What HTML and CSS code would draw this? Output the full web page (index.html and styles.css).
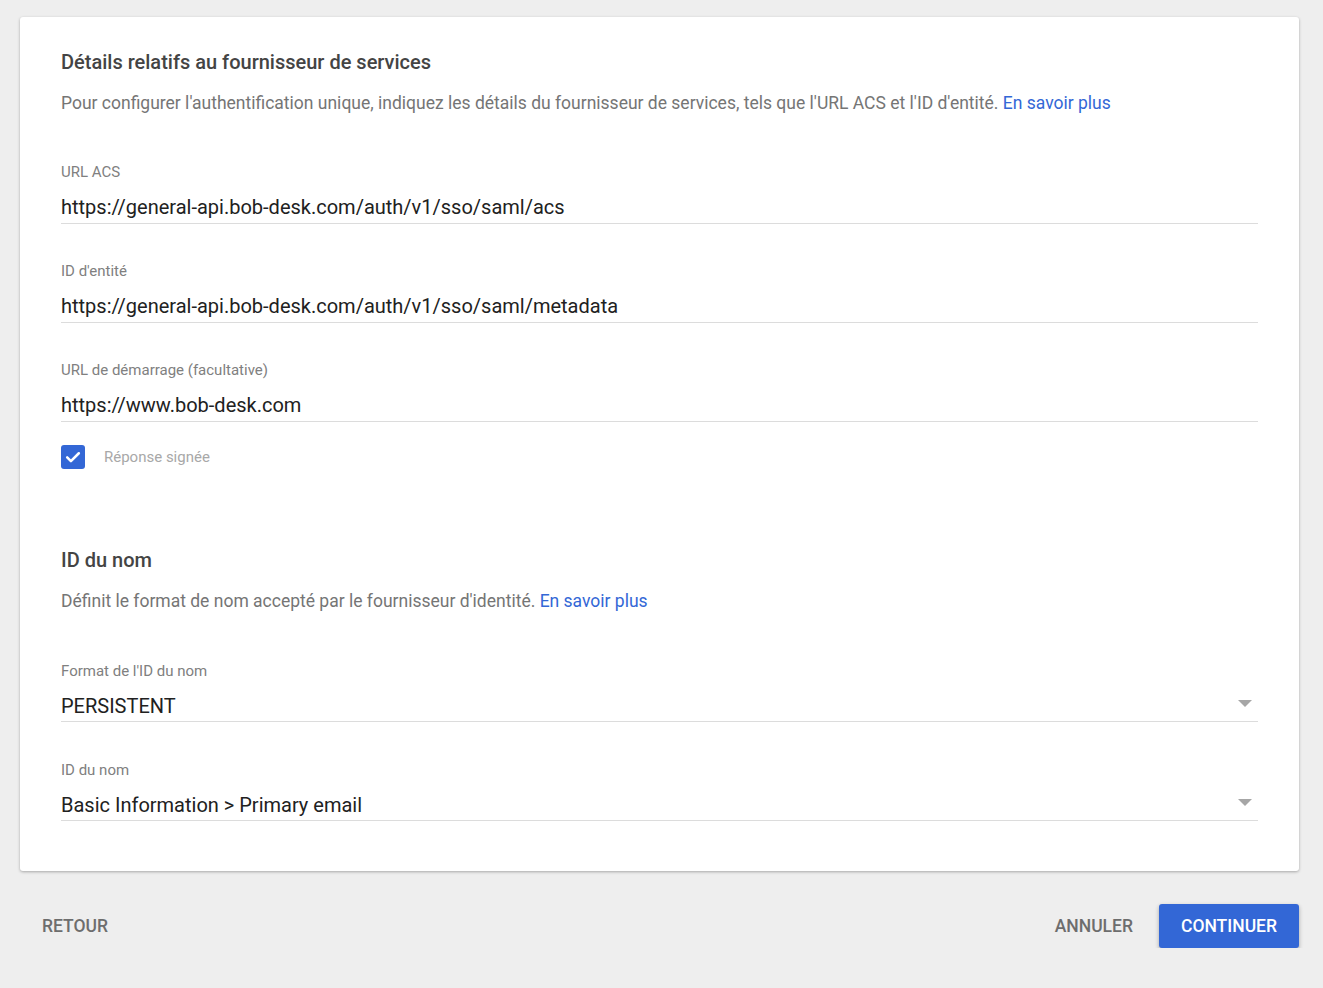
FILE: index.html
```html
<!DOCTYPE html>
<html lang="fr">
<head>
  <meta charset="UTF-8" />
  <meta name="viewport" content="width=device-width, initial-scale=1" />
  <title>Fournisseur de services</title>
  <link rel="stylesheet" href="styles.css">
</head>
<body>

  <div class="page">
    <div class="card">
      <div class="section">
        <div class="section-title">Détails relatifs au fournisseur de services</div>
        <div class="section-desc">
          Pour configurer l'authentification unique, indiquez les détails du fournisseur de services, tels que l'URL ACS et l'ID d'entité.
          <a class="link" href="#">En savoir plus</a>
        </div>

        <div class="field">
          <div class="label">URL ACS</div>
          <div class="value">https://general-api.bob-desk.com/auth/v1/sso/saml/acs</div>
        </div>
        <div class="field">
          <div class="label">ID d'entité</div>
          <div class="value">https://general-api.bob-desk.com/auth/v1/sso/saml/metadata</div>
        </div>
        <div class="field">
          <div class="label">URL de démarrage (facultative)</div>
          <div class="value">https://www.bob-desk.com</div>
        </div>

        <label class="checkbox-row">
          <span class="checkbox">
            <svg viewBox="0 0 24 24" width="20" height="20">
              <path d="M5 12.5l4.5 4.5L19 7.5" fill="none" stroke="#fff" stroke-width="3" stroke-linecap="round" stroke-linejoin="round"/>
            </svg>
          </span>
          <span class="checkbox-label">Réponse signée</span>
        </label>
      </div>

      <div class="section section-second">
        <div class="section-title">ID du nom</div>
        <div class="section-desc">
          Définit le format de nom accepté par le fournisseur d'identité.
          <a class="link" href="#">En savoir plus</a>
        </div>

        <div class="field">
          <div class="label">Format de l'ID du nom</div>
          <div class="value select">
            <span>PERSISTENT</span>
            <span class="arrow"></span>
          </div>
        </div>
        <div class="field">
          <div class="label">ID du nom</div>
          <div class="value select">
            <span>Basic Information &gt; Primary email</span>
            <span class="arrow"></span>
          </div>
        </div>
      </div>
    </div>

    <div class="actions">
      <button class="btn btn-flat">Retour</button>
      <div class="actions-right">
        <button class="btn btn-flat">Annuler</button>
        <button class="btn btn-primary">Continuer</button>
      </div>
    </div>
  </div>

</body>
</html>
```

FILE: styles.css
```css
body {
  font-family: Roboto, "Noto Sans", sans-serif;
  margin: 0;
  background: #eeeeee;
  color: #212121;
}
.page {
  padding: 17px 24px 0 20px;
}
.card {
  background: #fff;
  border-radius: 3px;
  box-shadow: 0 1px 3px rgba(0,0,0,0.3);
  padding: 33px 41px 50px 41px;
}
.section-second {
  margin-top: 79px;
}
.section-title {
  font-size: 20px;
  font-weight: 500;
  color: #444;
  line-height: 24px;
}
.section-desc {
  font-size: 17.5px;
  color: #757575;
  line-height: 24px;
  margin-top: 17px;
  margin-bottom: 47px;
}
.section-second .section-desc {
  margin-bottom: 48px;
}
.link {
  color: #3367d6;
  text-decoration: none;
}
.field {
  margin-bottom: 37px;
}
.section-second .field {
  margin-bottom: 38px;
}
.field:last-child,
.section-second .field:last-child {
  margin-bottom: 0;
}
.label {
  font-size: 15px;
  color: #808080;
  line-height: 20px;
}
.value {
  font-size: 20px;
  color: #212121;
  line-height: 24px;
  margin-top: 13px;
  padding-bottom: 4px;
  border-bottom: 1px solid #dcdcdc;
}
.select {
  display: flex;
  justify-content: space-between;
  align-items: center;
  padding-bottom: 3px;
}
.arrow {
  width: 0;
  height: 0;
  border-left: 7px solid transparent;
  border-right: 7px solid transparent;
  border-top: 7px solid #a6a6a6;
  margin-right: 6px;
  margin-bottom: 5px;
}
.checkbox-row {
  display: flex;
  align-items: center;
  gap: 19px;
  margin-top: -14px;
}
.checkbox {
  width: 24px;
  height: 24px;
  border-radius: 3px;
  background: #3367d6;
  display: flex;
  justify-content: center;
  align-items: center;
}
.checkbox-label {
  font-size: 15px;
  color: #a8a8a8;
}
.actions {
  display: flex;
  justify-content: space-between;
  align-items: center;
  margin-top: 33px;
}
.actions-right {
  display: flex;
  align-items: center;
  gap: 4px;
}
.btn {
  font-family: Roboto, "Noto Sans", sans-serif;
  font-size: 17.5px;
  font-weight: 500;
  text-transform: uppercase;
  border: none;
  border-radius: 3px;
  height: 44px;
  padding: 0 22px;
  cursor: pointer;
  background: transparent;
  color: #6d6d6d;
}
.btn-primary {
  background: #3367d6;
  color: #fff;
  box-shadow: 0 2px 4px rgba(0,0,0,0.3);
}
```
